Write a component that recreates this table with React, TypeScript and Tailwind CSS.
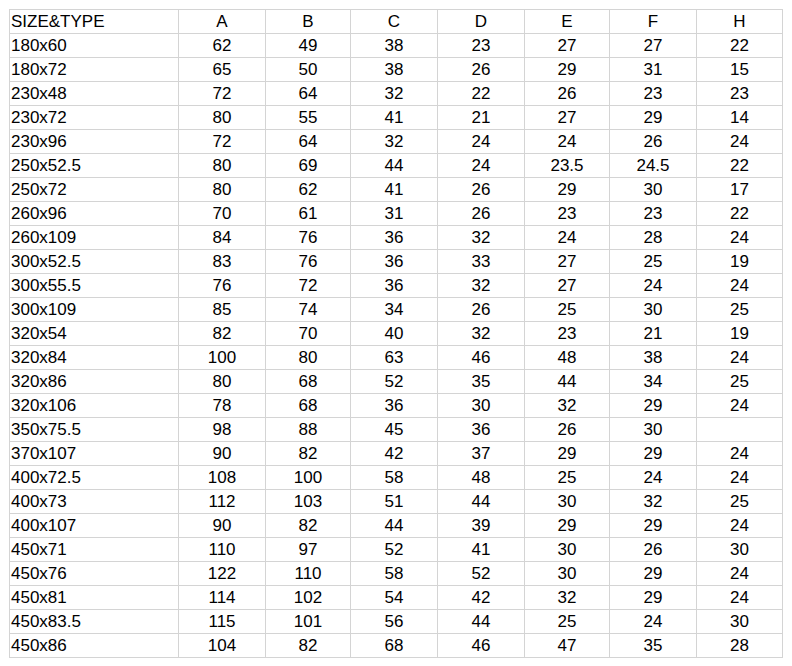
const header = ["SIZE&TYPE", "A", "B", "C", "D", "E", "F", "H"];
const rows: string[][] = [
  ["180x60", "62", "49", "38", "23", "27", "27", "22"],
  ["180x72", "65", "50", "38", "26", "29", "31", "15"],
  ["230x48", "72", "64", "32", "22", "26", "23", "23"],
  ["230x72", "80", "55", "41", "21", "27", "29", "14"],
  ["230x96", "72", "64", "32", "24", "24", "26", "24"],
  ["250x52.5", "80", "69", "44", "24", "23.5", "24.5", "22"],
  ["250x72", "80", "62", "41", "26", "29", "30", "17"],
  ["260x96", "70", "61", "31", "26", "23", "23", "22"],
  ["260x109", "84", "76", "36", "32", "24", "28", "24"],
  ["300x52.5", "83", "76", "36", "33", "27", "25", "19"],
  ["300x55.5", "76", "72", "36", "32", "27", "24", "24"],
  ["300x109", "85", "74", "34", "26", "25", "30", "25"],
  ["320x54", "82", "70", "40", "32", "23", "21", "19"],
  ["320x84", "100", "80", "63", "46", "48", "38", "24"],
  ["320x86", "80", "68", "52", "35", "44", "34", "25"],
  ["320x106", "78", "68", "36", "30", "32", "29", "24"],
  ["350x75.5", "98", "88", "45", "36", "26", "30", ""],
  ["370x107", "90", "82", "42", "37", "29", "29", "24"],
  ["400x72.5", "108", "100", "58", "48", "25", "24", "24"],
  ["400x73", "112", "103", "51", "44", "30", "32", "25"],
  ["400x107", "90", "82", "44", "39", "29", "29", "24"],
  ["450x71", "110", "97", "52", "41", "30", "26", "30"],
  ["450x76", "122", "110", "58", "52", "30", "29", "24"],
  ["450x81", "114", "102", "54", "42", "32", "29", "24"],
  ["450x83.5", "115", "101", "56", "44", "25", "24", "30"],
  ["450x86", "104", "82", "68", "46", "47", "35", "28"],
];

export default function App() {
  const all = [header, ...rows];
  return (
    <div className="min-h-[666px] w-[792px] bg-white pl-[9px] pt-[9px]" style={{ fontFamily: '"Liberation Sans", Arial, sans-serif' }}>
      <div className="grid w-[774px] grid-cols-[169px_87px_85px_87px_87px_85px_87px_86px] border-l border-t border-[#d4d4d4] text-[17px] leading-[23px] text-black">
        {all.map((r, i) =>
          r.map((c, j) => (
            <div
              key={`${i}-${j}`}
              className={
                j === 0
                  ? "h-[24px] border-b border-r border-[#d4d4d4] pl-[1px] text-left whitespace-nowrap"
                  : "h-[24px] border-b border-r border-[#d4d4d4] text-center whitespace-nowrap"
              }
            >
              {c}
            </div>
          ))
        )}
      </div>
    </div>
  );
}
